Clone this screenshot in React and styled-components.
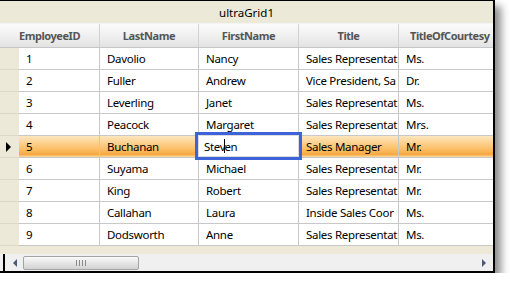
import React from 'react';
import styled, { createGlobalStyle } from 'styled-components';

const GlobalStyle = createGlobalStyle`
  body {
    margin: 0;
    background: #ffffff;
    font-family: "Noto Sans", "Liberation Sans", sans-serif;
  }
`;

const Frame = styled.div`
  width: 493px;
  border-top: 1px solid #000;
  border-right: 2px solid #000;
  border-bottom: 2px solid #000;
  background: #fff;
  box-shadow: 6px 6px 8px rgba(0, 0, 0, 0.45);
  overflow: hidden;
`;

const Caption = styled.div`
  height: 22px;
  background: #ece9d8;
  display: flex;
  align-items: center;
  justify-content: center;
  font-size: 11.5px;
  color: #000;
`;

const HeaderRow = styled.div`
  display: flex;
  height: 23px;
  border-top: 1px solid #f4f4f4;
  border-bottom: 1px solid #c6c6c6;
  background: linear-gradient(#fbfbfb, #f0f0f0 50%, #e3e3e3);
  white-space: nowrap;
`;

const HeaderCell = styled.div`
  flex: 0 0 ${(p) => p.$w}px;
  display: flex;
  align-items: center;
  justify-content: ${(p) => (p.$last ? 'flex-start' : 'center')};
  padding-left: ${(p) => (p.$last ? '11px' : '0')};
  box-sizing: border-box;
  border-right: 1px solid #d2d2d2;
  font-size: 11px;
  font-weight: 700;
  color: #555;
  overflow: hidden;
  letter-spacing: -0.45px;
`;

const Row = styled.div`
  display: flex;
  height: 21px;
  border-bottom: 1px solid #c8c8c8;
  white-space: nowrap;
  background: ${(p) =>
    p.$active
      ? 'linear-gradient(#fde6bd, #fdd08c 35%, #fbbd62 65%, #f8a944 88%, #fcd9a0)'
      : '#fff'};
`;

const Selector = styled.div`
  flex: 0 0 19px;
  background: #ece9d8;
  display: flex;
  align-items: center;
  justify-content: center;
  margin-bottom: -1px;
  border-bottom: 1px solid #ddd9c6;
`;

const Arrow = styled.span`
  width: 0;
  height: 0;
  border-top: 5px solid transparent;
  border-bottom: 5px solid transparent;
  border-left: 5px solid #000;
  margin-left: -2px;
`;

const Cell = styled.div`
  position: relative;
  flex: 0 0 ${(p) => p.$w}px;
  display: flex;
  align-items: center;
  padding-left: 7px;
  box-sizing: border-box;
  border-right: 1px solid #c8c8c8;
  font-size: 11.5px;
  letter-spacing: -0.3px;
  color: #000;
  overflow: ${(p) => (p.$editing ? 'visible' : 'hidden')};
`;

const Editor = styled.div`
  position: absolute;
  left: -4px;
  top: -4px;
  right: -4px;
  bottom: -3px;
  border: 3px solid #3d62d9;
  background: #fff;
  z-index: 2;
  display: flex;
  align-items: center;
  padding-left: 6px;
  font-size: 11.5px;
  box-shadow: inset 0 0 0 1px #dcdcdc;
`;

const Caret = styled.span`
  display: inline-block;
  width: 1px;
  height: 14px;
  background: #000;
  margin: 0 -1px 0 -1px;
`;

const Strip = styled.div`
  height: 8px;
  background: #ece9d8;
`;

const ScrollRow = styled.div`
  height: 17px;
  display: flex;
  align-items: center;
  background: #f0f0f0;
`;

const Edge = styled.div`
  width: 2px;
  height: 17px;
  background: #000;
  margin-left: 3px;
`;

const ArrowBtn = styled.span`
  width: 0;
  height: 0;
  border-top: 4px solid transparent;
  border-bottom: 4px solid transparent;
  ${(p) =>
    p.$dir === 'left'
      ? 'border-right: 4px solid #4c5a78; margin: 0 6px 0 8px;'
      : 'border-left: 4px solid #4c5a78; margin-left: auto; margin-right: 7px;'}
`;

const Thumb = styled.div`
  width: 116px;
  height: 14px;
  box-sizing: border-box;
  border: 1px solid #a3a3a3;
  border-radius: 2px;
  background: linear-gradient(#fafafa, #e6e6e6 50%, #d2d2d2);
  display: flex;
  align-items: center;
  justify-content: center;
  gap: 2px;
`;

const Grip = styled.span`
  width: 1px;
  height: 6px;
  background: #8a8a8a;
`;

const widths = [81, 99, 100, 100, 100];
const headers = ['EmployeeID', 'LastName', 'FirstName', 'Title', 'TitleOfCourtesy'];

const data = [
  ['1', 'Davolio', 'Nancy', 'Sales Representat', 'Ms.'],
  ['2', 'Fuller', 'Andrew', 'Vice President, Sa', 'Dr.'],
  ['3', 'Leverling', 'Janet', 'Sales Representat', 'Ms.'],
  ['4', 'Peacock', 'Margaret', 'Sales Representat', 'Mrs.'],
  ['5', 'Buchanan', 'Steven', 'Sales Manager', 'Mr.'],
  ['6', 'Suyama', 'Michael', 'Sales Representat', 'Mr.'],
  ['7', 'King', 'Robert', 'Sales Representat', 'Mr.'],
  ['8', 'Callahan', 'Laura', 'Inside Sales Coor', 'Ms.'],
  ['9', 'Dodsworth', 'Anne', 'Sales Representat', 'Ms.'],
];

const App = () => {
  return (
    <>
      <GlobalStyle />
      <Frame>
        <Caption>ultraGrid1</Caption>
        <HeaderRow>
          {headers.map((h, i) => (
            <HeaderCell key={h} $w={i === 0 ? 100 : widths[i]} $last={i === 4}>
              {h}
            </HeaderCell>
          ))}
        </HeaderRow>
        {data.map((row, r) => {
          const active = r === 4;
          return (
            <Row key={row[0]} $active={active}>
              <Selector>{active && <Arrow />}</Selector>
              {row.map((v, c) => {
                const editing = active && c === 2;
                return (
                  <Cell key={c} $w={widths[c]} $editing={editing}>
                    {editing ? (
                      <Editor>
                        Stev
                        <Caret />
                        en
                      </Editor>
                    ) : (
                      v
                    )}
                  </Cell>
                );
              })}
            </Row>
          );
        })}
        <Strip />
        <ScrollRow>
          <Edge />
          <ArrowBtn $dir="left" />
          <Thumb>
            <Grip />
            <Grip />
            <Grip />
            <Grip />
          </Thumb>
          <ArrowBtn $dir="right" />
        </ScrollRow>
      </Frame>
    </>
  );
};

export default App;
